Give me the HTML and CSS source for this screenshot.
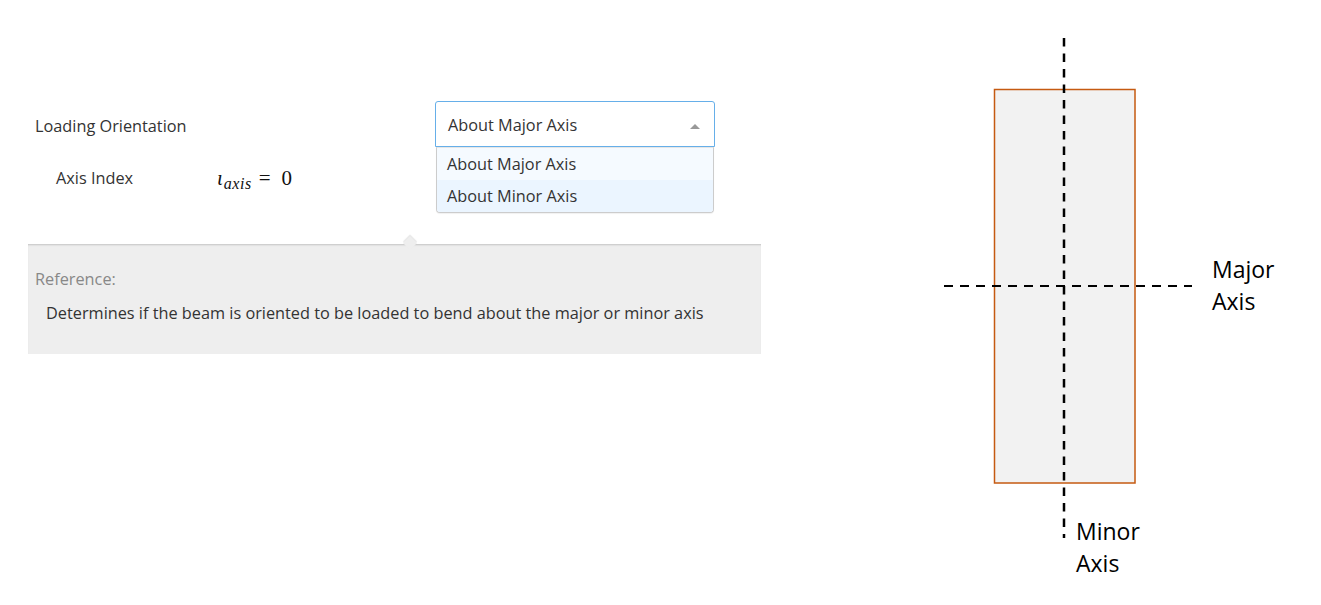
FILE: index.html
```html
<!DOCTYPE html>
<html>
<head>
<meta charset="utf-8">
<link rel="stylesheet" href="styles.css">
</head>
<body>
<div class="page">
  <div class="left">
    <div class="form">
      <div class="row row-main">
        <div class="label">Loading Orientation</div>
        <div class="select-wrap">
          <div class="select">
            <span class="select-value">About Major Axis</span>
            <span class="caret"></span>
          </div>
          <ul class="menu">
            <li class="opt opt-selected">About Major Axis</li>
            <li class="opt opt-hover">About Minor Axis</li>
          </ul>
        </div>
      </div>
      <div class="row row-sub">
        <div class="sublabel">Axis Index</div>
        <div class="math"><span class="mi">ι</span><sub class="msub">axis</sub><span class="mo">=</span><span class="mn">0</span></div>
      </div>
    </div>
    <div class="panel">
      <div class="notch"></div>
      <div class="ref-title">Reference:</div>
      <div class="ref-text">Determines if the beam is oriented to be loaded to bend about the major or minor axis</div>
    </div>
  </div>
  <div class="diagram">
    <svg width="421" height="605" viewBox="0 0 421 605" xmlns="http://www.w3.org/2000/svg">
      <rect x="94.5" y="89.5" width="140.5" height="393.5" fill="#f2f2f2" stroke="#c55a11" stroke-width="1.5"/>
      <line x1="164" y1="38" x2="164" y2="538" stroke="#000" stroke-width="2.5" stroke-dasharray="8.5 7"/>
      <line x1="44" y1="286" x2="292" y2="286" stroke="#000" stroke-width="2.2" stroke-dasharray="9 7"/>
      <text class="dlabel" x="312" y="278">Major</text>
      <text class="dlabel" x="312" y="310">Axis</text>
      <text class="dlabel" x="176" y="540">Minor</text>
      <text class="dlabel" x="176" y="572">Axis</text>
    </svg>
  </div>
</div>
</body>
</html>
```
FILE: styles.css
```css
html, body {
  margin: 0;
  padding: 0;
  background: #ffffff;
}
body {
  font-family: "Open Sans", "Noto Sans", sans-serif;
  color: #333333;
}
.page {
  display: flex;
  width: 1321px;
  height: 605px;
  overflow: hidden;
}
.left {
  width: 900px;
  flex: none;
  padding-top: 101px;
  box-sizing: border-box;
}
.form {
  padding-left: 35px;
}
.row {
  display: flex;
  align-items: center;
}
.row-main {
  height: 46px;
}
.label {
  width: 400px;
  font-size: 16.3px;
  color: #333;
  padding-top: 3px;
}
.select-wrap {
  position: relative;
  width: 280px;
}
.select {
  height: 46px;
  box-sizing: border-box;
  border: 1px solid #66afe9;
  border-radius: 3px 3px 0 0;
  display: flex;
  align-items: center;
  padding: 1px 12px 0;
  background: #fff;
}
.select-value {
  flex: 1;
  font-size: 16.3px;
  color: #333;
}
.caret {
  width: 0;
  height: 0;
  border-left: 5px solid transparent;
  border-right: 5px solid transparent;
  border-bottom: 5px solid #999;
  margin-right: 2px;
  margin-top: 3px;
}
.menu {
  position: absolute;
  left: 1px;
  top: 46px;
  width: 278px;
  box-sizing: border-box;
  margin: 0;
  padding: 0;
  list-style: none;
  border: 1px solid #ccc;
  border-top-color: #e6e6e6;
  border-radius: 0 0 4px 4px;
  background: #fff;
  box-shadow: 0 1px 1px rgba(0,0,0,0.06);
  z-index: 2;
  overflow: hidden;
}
.opt {
  height: 32px;
  line-height: 32px;
  padding: 0 10px;
  font-size: 16.3px;
  color: #333;
}
.opt-selected {
  background: #f5faff;
}
.opt-hover {
  background: #ebf5ff;
}
.row-sub {
  height: 34px;
  margin-top: 14px;
  padding-left: 21px;
}
.sublabel {
  width: 161px;
  font-size: 16.3px;
  color: #333;
}
.math {
  font-family: "Liberation Serif", "DejaVu Serif", serif;
  font-size: 21px;
  color: #111;
  display: flex;
  align-items: baseline;
}
.mi {
  font-style: italic;
}
.msub {
  font-family: "Liberation Serif", "DejaVu Serif", serif;
  font-style: italic;
  font-size: 16px;
  vertical-align: baseline;
  position: relative;
  top: 4px;
  margin-left: 1px;
  letter-spacing: 0.5px;
}
.mo {
  margin: 0 11px 0 7px;
}
.panel {
  position: relative;
  margin-top: 49px;
  margin-left: 28px;
  width: 733px;
  height: 110px;
  box-sizing: border-box;
  background: #eeeeee;
  box-shadow: inset 0 2px 2px -1px rgba(0,0,0,0.18);
  padding: 24px 0 0 7px;
}
.notch {
  position: absolute;
  left: 377px;
  top: -6px;
  width: 10px;
  height: 10px;
  background: #eeeeee;
  transform: rotate(45deg);
  box-shadow: -1px -1px 1px rgba(0,0,0,0.1);
}
.ref-title {
  position: relative;
  font-size: 16.3px;
  color: #888;
  line-height: 22px;
}
.ref-text {
  font-size: 16.3px;
  color: #333;
  line-height: 22px;
  margin-top: 12px;
  padding-left: 11px;
}
.diagram {
  flex: none;
  width: 421px;
  height: 605px;
}
.diagram svg {
  display: block;
}
.dlabel {
  font-family: "Open Sans", "Noto Sans", sans-serif;
  font-size: 23px;
  fill: #000;
}
```
